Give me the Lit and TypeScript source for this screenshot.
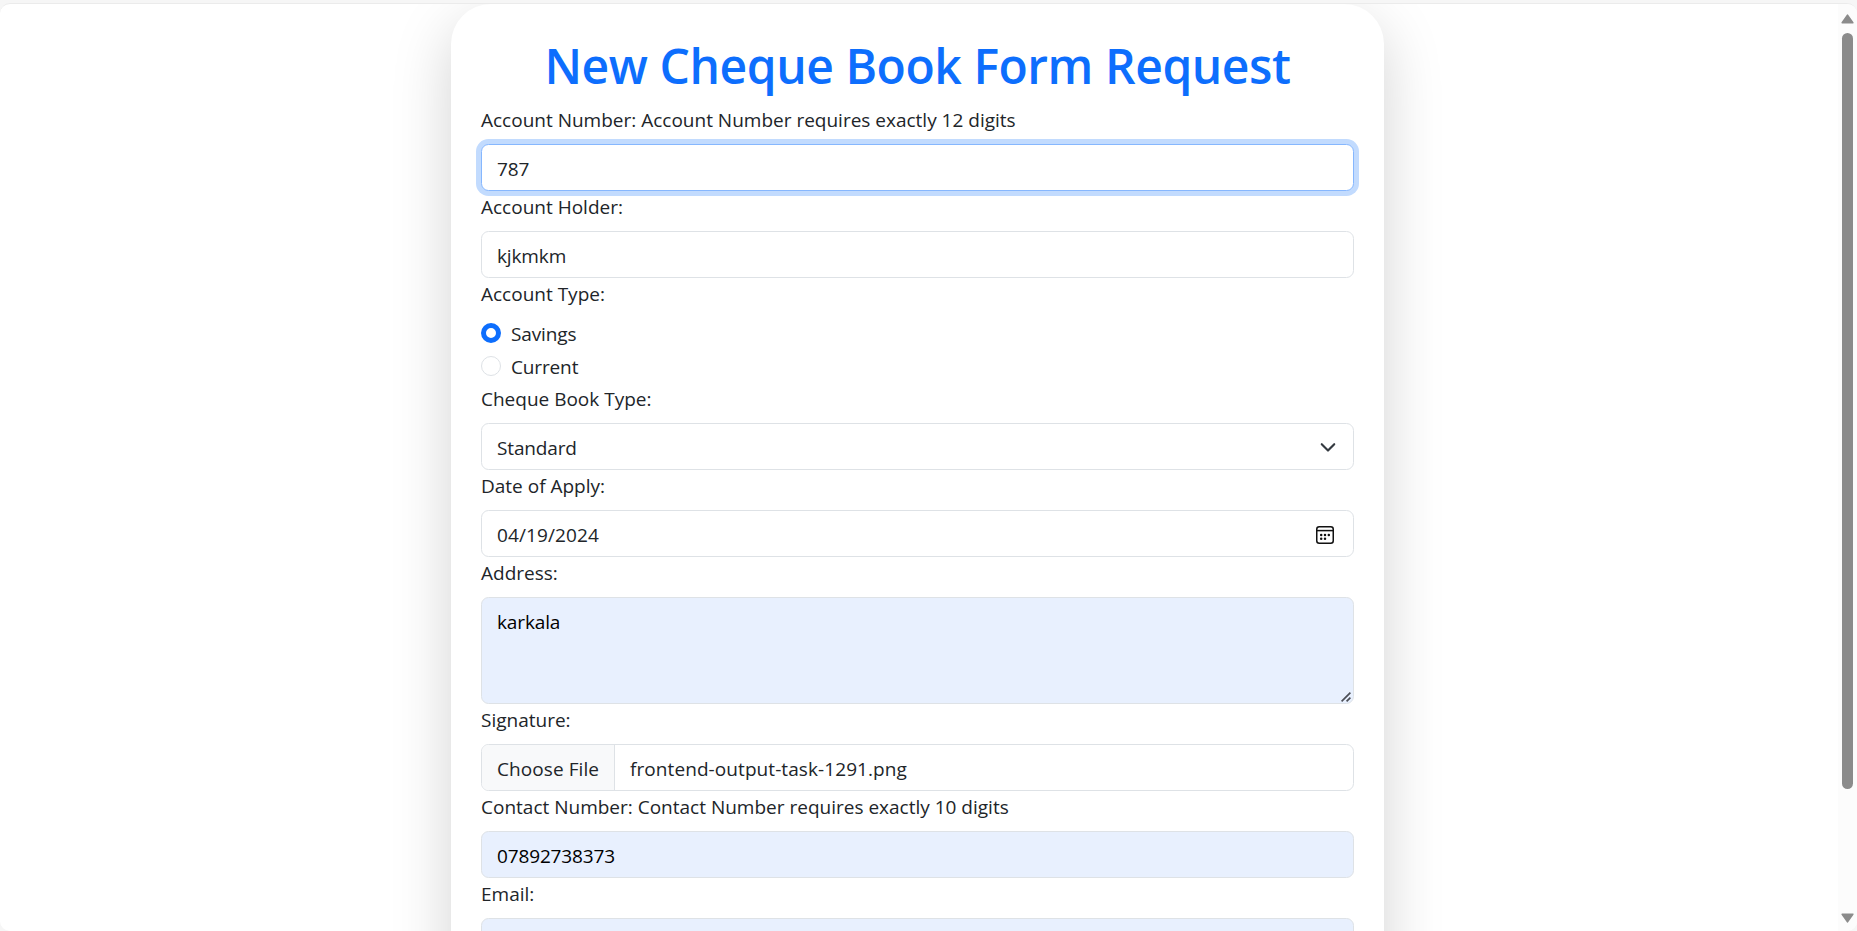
import { LitElement, html, css, svg } from "lit";
import { customElement, property } from "lit/decorators.js";

/** A label with the control that belongs to it. */
@customElement("form-field")
class FormField extends LitElement {
  @property() label = "";

  static styles = css`
    :host { display: block; }
    .label { height: 30px; line-height: 32px; margin-bottom: 10px; white-space: nowrap; letter-spacing: 0; }
  `;

  render() {
    return html`<div class="label">${this.label}</div><slot></slot>`;
  }
}

@customElement("app-root")
class AppRoot extends LitElement {
  static styles = css`
    * { box-sizing: border-box; }
    :host {
      display: block;
      height: 931px;
      overflow: hidden;
      padding-top: 3px;
      background: #f6f6f6;
      color: #212529;
      font: 19px "Open Sans", "Noto Sans", sans-serif;
      letter-spacing: -0.14px;
    }
    .window {
      display: flex;
      height: 928px;
      overflow: hidden;
      border-top: 1px solid #ebebeb;
      border-radius: 10px;
      background: #fff;
    }
    .page { flex: 1; min-width: 0; display: flex; justify-content: center; align-items: flex-start; padding-right: 3px; overflow: hidden; }
    .card {
      width: 933px;
      height: 1160px;
      flex: none;
      padding: 30px 30px 0;
      border-radius: 40px;
      background: #fff;
      box-shadow: 0 20px 60px rgba(0, 0, 0, 0.175);
    }
    h1 {
      margin: 0 0 10px;
      height: 60px;
      line-height: 64px;
      font-size: 48px;
      font-weight: 600;
      letter-spacing: -0.45px;
      text-align: center;
      white-space: nowrap;
      color: #0d6efd;
    }
    .control {
      display: flex;
      align-items: center;
      width: 100%;
      height: 47px;
      margin: 0;
      padding: 2px 15px 0;
      border: 1px solid #dee2e6;
      border-radius: 7.5px;
      background: #fff;
      color: inherit;
      font: inherit;
      letter-spacing: inherit;
      outline: none;
    }
    .active { border-color: #86b7fe; box-shadow: 0 0 0 5px #c2dbfe; }
    .filled { background: #e8f0fe; color: #000; }
    .between { justify-content: space-between; }
    .date { padding-right: 19px; letter-spacing: 0.1px; }
    .area { height: 107px; align-items: flex-start; justify-content: space-between; padding: 9px 2px 1px 15px; }
    .area span { line-height: 30px; }
    .area svg { align-self: flex-end; }
    .file { padding: 0; overflow: hidden; letter-spacing: 0.08px; }
    .choose, .name { display: flex; align-items: center; height: 100%; padding: 2px 15px 0; }
    .choose { width: 133px; background: #f8f9fa; border-right: 1px solid #dee2e6; white-space: nowrap; }
    .radios { display: grid; grid-template-rows: 33px 32px; }
    .radio { display: flex; align-items: flex-start; gap: 10px; line-height: 32px; }
    .dot { width: 20px; height: 20px; margin-top: 5px; border: 1px solid #dee2e6; border-radius: 50%; background: #fff; }
    .checked { border: 5px solid #0d6efd; }
    .scrollbar {
      width: 19px;
      flex: none;
      display: flex;
      flex-direction: column;
      align-items: center;
      padding: 10px 0 8px 0;
      background: #fcfcfc;
    }
    .thumb { width: 11px; height: 756px; margin: 9px 0 auto; border-radius: 6px; background: #8b8b8b; }
  `;

  private chevron = svg`<svg width="20" height="20" viewBox="0 0 16 16" fill="none" stroke="#343a40"
    stroke-width="1.7" stroke-linecap="round" stroke-linejoin="round"><path d="m3 5 5 5 5-5"/></svg>`;

  private calendar = svg`<svg width="18" height="18" viewBox="0 0 18 18" fill="none" stroke="#111" stroke-width="1.5">
    <rect x=".75" y=".75" width="16.5" height="16.5" rx="2.5"/><path d="M1 4.6h16"/>
    <g fill="#111" stroke="none"><circle cx="5.2" cy="9" r="1.25"/><circle cx="9" cy="9" r="1.25"/><circle cx="12.8" cy="9" r="1.25"/>
    <circle cx="5.2" cy="12.8" r="1.25"/><circle cx="9" cy="12.8" r="1.25"/></g></svg>`;

  private grip = svg`<svg width="10" height="10" viewBox="0 0 10 10" stroke="#4c4f57" stroke-width="1.7">
    <path d="M.6 9.4 9.4.6M5.6 9.4l3.8-3.8"/></svg>`;

  render() {
    return html`
      <div class="window">
        <main class="page">
          <section class="card">
            <h1>New Cheque Book Form Request</h1>
            <form-field label="Account Number: Account Number requires exactly 12 digits">
              <input class="control active" .value=${"787"} />
            </form-field>
            <form-field label="Account Holder:">
              <input class="control" .value=${"kjkmkm"} />
            </form-field>
            <form-field label="Account Type:">
              <div class="radios">
                <div class="radio"><span class="dot checked"></span>Savings</div>
                <div class="radio"><span class="dot"></span>Current</div>
              </div>
            </form-field>
            <form-field label="Cheque Book Type:">
              <div class="control between select"><span>Standard</span>${this.chevron}</div>
            </form-field>
            <form-field label="Date of Apply:">
              <div class="control between date"><span>04/19/2024</span>${this.calendar}</div>
            </form-field>
            <form-field label="Address:">
              <div class="control filled area"><span>karkala</span>${this.grip}</div>
            </form-field>
            <form-field label="Signature:">
              <div class="control file">
                <span class="choose">Choose File</span><span class="name">frontend-output-task-1291.png</span>
              </div>
            </form-field>
            <form-field label="Contact Number: Contact Number requires exactly 10 digits">
              <input class="control filled" .value=${"07892738373"} />
            </form-field>
            <form-field label="Email:">
              <input class="control filled" />
            </form-field>
          </section>
        </main>
        <aside class="scrollbar">
          <svg width="13" height="10" viewBox="0 0 13 10"><path d="M6.5 1.2 11.8 8.8H1.2z" fill="#8b8b8b" stroke="#8b8b8b" stroke-width="1.6" stroke-linejoin="round"/></svg>
          <div class="thumb"></div>
          <svg width="13" height="10" viewBox="0 0 13 10"><path d="M6.5 8.8 11.8 1.2H1.2z" fill="#8b8b8b" stroke="#8b8b8b" stroke-width="1.6" stroke-linejoin="round"/></svg>
        </aside>
      </div>
    `;
  }
}
